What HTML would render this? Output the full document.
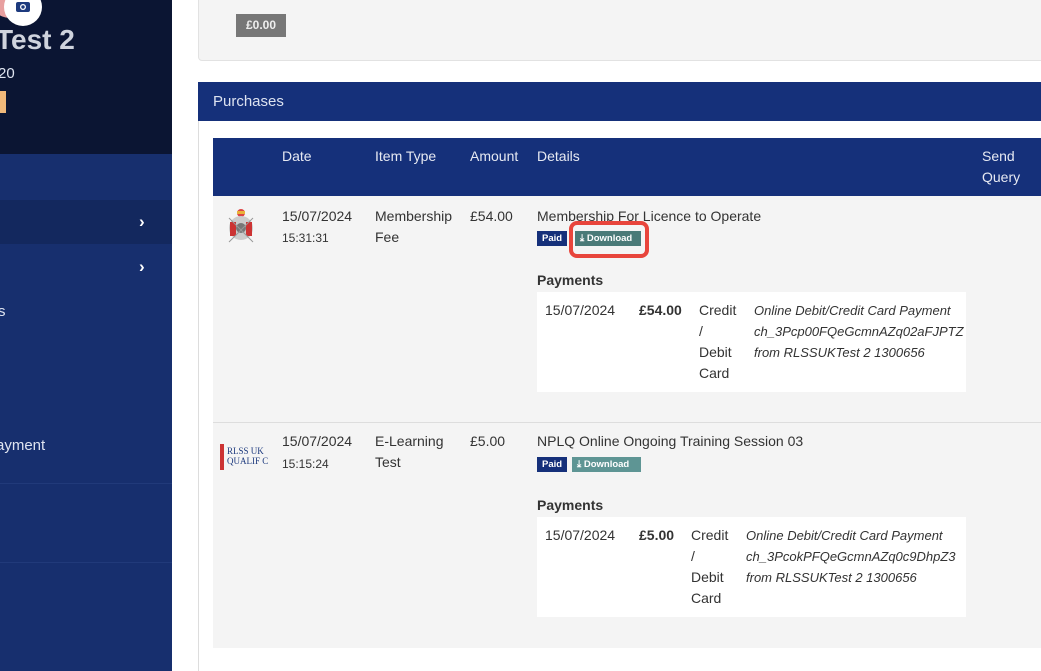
<!DOCTYPE html>
<html><head><meta charset="utf-8"><style>
*{box-sizing:border-box;margin:0;padding:0}
html,body{width:1041px;height:671px;overflow:hidden}
body{background:#fff;font-family:"Liberation Sans",sans-serif;position:relative;color:#333}
.abs{position:absolute}
.side{left:0;top:0;width:172px;height:671px;background:#172f6e}
.sidetop{left:0;top:0;width:172px;height:154px;background:#0b1533}
.t{position:absolute;font-size:14px;color:#333;white-space:nowrap;line-height:21px}
.w{color:#dfe4f0}
.hd{color:#e6e9f2;font-size:14px}
.badge{position:absolute;font-size:9.5px;font-weight:bold;color:#fff;height:15px;line-height:15px;padding:0 5px}
.it{font-style:italic;font-size:13px}
</style></head><body>
<div class="abs side"></div>
<div class="abs sidetop"></div>
<div class="abs" style="left:-10px;top:-22px;width:40px;height:40px;border-radius:50%;background:#e8a0a0"></div>
<div class="abs" style="left:4px;top:-12px;width:38px;height:38px;border-radius:50%;background:#fff"></div>
<svg class="abs" style="left:14px;top:0" width="18" height="14" viewBox="0 0 18 14"><rect x="2" y="2" width="14" height="10" rx="2" fill="#1d3a7e"/><circle cx="9" cy="7" r="3" fill="#fff"/><circle cx="9" cy="7" r="1.7" fill="#1d3a7e"/></svg>
<div class="t" style="left:-4px;top:22px;font-size:28px;font-weight:bold;color:#cfd3dd;line-height:36px">Test 2</div>
<div class="t w" style="left:-2px;top:63px;font-size:15px">20</div>
<div class="abs" style="left:0;top:91px;width:6px;height:22px;background:#f0b87a"></div>
<div class="abs" style="left:0;top:200px;width:172px;height:44px;background:#13285e"></div>
<div class="t" style="left:139px;top:211px;color:#fff;font-weight:bold;font-size:17px">›</div>
<div class="t" style="left:139px;top:256px;color:#fff;font-weight:bold;font-size:17px">›</div>
<div class="t w" style="left:-2px;top:301px;font-size:15px">s</div>
<div class="t w" style="left:-4px;top:435px;font-size:15px">ayment</div>
<div class="abs" style="left:0;top:483px;width:172px;height:1px;background:#213a7a"></div>
<div class="abs" style="left:0;top:562px;width:172px;height:1px;background:#213a7a"></div>

<div class="abs" style="left:198px;top:-5px;width:850px;height:66px;background:#f4f4f4;border:1px solid #e2e2e2;border-radius:4px"></div>
<div class="abs" style="left:236px;top:14px;width:50px;height:23px;background:#777;color:#eee;font-size:12px;font-weight:bold;text-align:center;line-height:23px">£0.00</div>

<div class="abs" style="left:198px;top:82px;width:850px;height:600px;border:1px solid #ddd;background:#fff"></div>
<div class="abs" style="left:198px;top:82px;width:850px;height:39px;background:#15307a"></div>
<div class="t" style="left:213px;top:91px;color:#dce2f0;font-size:15px">Purchases</div>

<div class="abs" style="left:213px;top:138px;width:840px;height:58px;background:#15307a"></div>
<div class="t hd" style="left:282px;top:146px">Date</div>
<div class="t hd" style="left:375px;top:146px">Item Type</div>
<div class="t hd" style="left:470px;top:146px">Amount</div>
<div class="t hd" style="left:537px;top:146px">Details</div>
<div class="t hd" style="left:982px;top:146px">Send<br>Query</div>

<div class="abs" style="left:213px;top:196px;width:840px;height:226px;background:#f4f4f4"></div>
<div class="abs" style="left:213px;top:422px;width:840px;height:1px;background:#ddd"></div>
<div class="abs" style="left:213px;top:423px;width:840px;height:225px;background:#f4f4f4"></div>

<svg class="abs" style="left:227px;top:208px" width="28" height="36" viewBox="0 0 28 36"><circle cx="14" cy="5" r="4" fill="#d44"/><rect x="10" y="3" width="8" height="3" fill="#e9b23a"/><ellipse cx="14" cy="20" rx="12" ry="12" fill="#ccc"/><rect x="3" y="14" width="6" height="14" fill="#c33"/><rect x="19" y="14" width="6" height="14" fill="#c33"/><circle cx="14" cy="20" r="5" fill="#777"/><path d="M2 34 L26 10 M2 10 L26 34" stroke="#999" stroke-width="1"/></svg>
<div class="t" style="left:282px;top:206px">15/07/2024</div>
<div class="t" style="left:282px;top:228px;font-size:12px">15:31:31</div>
<div class="t" style="left:375px;top:206px">Membership<br>Fee</div>
<div class="t" style="left:470px;top:206px">£54.00</div>
<div class="t" style="left:537px;top:206px">Membership For Licence to Operate</div>
<div class="badge" style="left:537px;top:231px;background:#15307a">Paid</div>
<div class="badge" style="left:575px;top:231px;width:66px;background:#4a7a78">⤓ Download</div>
<div class="abs" style="left:569px;top:221px;width:80px;height:37px;border:4px solid #e8453c;border-radius:8px"></div>
<div class="t" style="left:537px;top:270px;font-weight:bold">Payments</div>
<div class="abs" style="left:537px;top:292px;width:429px;height:100px;background:#fff"></div>
<div class="t" style="left:545px;top:300px">15/07/2024</div>
<div class="t" style="left:639px;top:300px;font-weight:bold">£54.00</div>
<div class="t" style="left:699px;top:300px">Credit<br>/<br>Debit<br>Card</div>
<div class="t it" style="left:754px;top:300px">Online Debit/Credit Card Payment<br>ch_3Pcp00FQeGcmnAZq02aFJPTZ<br>from RLSSUKTest 2 1300656</div>

<div class="abs" style="left:220px;top:444px;width:4px;height:26px;background:#c33"></div>
<div class="t" style="left:227px;top:446px;font-size:9px;color:#1d3a7e;line-height:10px;font-family:'Liberation Serif',serif">RLSS UK<br>QUALIF C</div>
<div class="t" style="left:282px;top:431px">15/07/2024</div>
<div class="t" style="left:282px;top:454px;font-size:12px">15:15:24</div>
<div class="t" style="left:375px;top:431px">E-Learning<br>Test</div>
<div class="t" style="left:470px;top:431px">£5.00</div>
<div class="t" style="left:537px;top:431px">NPLQ Online Ongoing Training Session 03</div>
<div class="badge" style="left:537px;top:457px;background:#15307a">Paid</div>
<div class="badge" style="left:572px;top:457px;width:69px;background:#5e9594">⤓ Download</div>
<div class="t" style="left:537px;top:495px;font-weight:bold">Payments</div>
<div class="abs" style="left:537px;top:517px;width:429px;height:100px;background:#fff"></div>
<div class="t" style="left:545px;top:525px">15/07/2024</div>
<div class="t" style="left:639px;top:525px;font-weight:bold">£5.00</div>
<div class="t" style="left:691px;top:525px">Credit<br>/<br>Debit<br>Card</div>
<div class="t it" style="left:746px;top:525px">Online Debit/Credit Card Payment<br>ch_3PcokPFQeGcmnAZq0c9DhpZ3<br>from RLSSUKTest 2 1300656</div>
</body></html>
